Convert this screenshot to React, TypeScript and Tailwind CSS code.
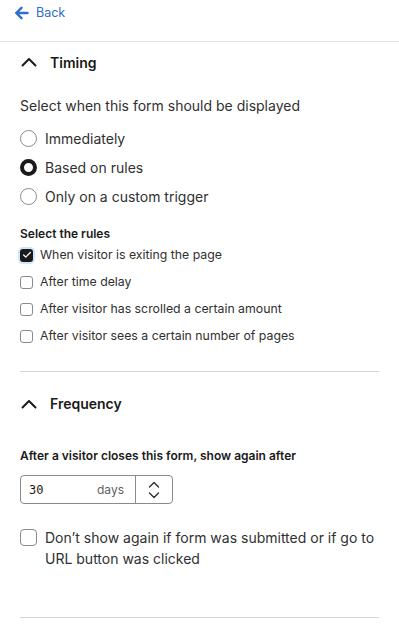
import { Check } from 'lucide-react';

const rules = [
  { label: 'When visitor is exiting the page', checked: true },
  { label: 'After time delay', checked: false },
  { label: 'After visitor has scrolled a certain amount', checked: false },
  { label: 'After visitor sees a certain number of pages', checked: false },
];

const radios = [
  { label: 'Immediately', checked: false },
  { label: 'Based on rules', checked: true },
  { label: 'Only on a custom trigger', checked: false },
];

const Radio = ({ checked }: { checked: boolean }) => (
  <span
    className={
      checked
        ? 'w-[17px] h-[17px] rounded-full border-[4px] border-[#1a1a1a] bg-white shrink-0'
        : 'w-[17px] h-[17px] rounded-full border border-[#8a8a8a] bg-white shrink-0'
    }
  />
);

const SmallBox = ({ checked }: { checked: boolean }) =>
  checked ? (
    <span className="w-[13px] h-[13px] rounded-[3px] bg-[#1a1a1a] flex items-center justify-center shrink-0 ring-2 ring-[#cfe6fb]">
      <Check size={10} strokeWidth={3} className="text-white" />
    </span>
  ) : (
    <span className="w-[13px] h-[13px] rounded-[3px] border border-[#8a8a8a] bg-white shrink-0" />
  );

const Caret = () => (
  <svg width="16" height="10" viewBox="0 0 16 10" className="shrink-0 text-[#1a1a1a]">
    <polyline points="1.5,8.5 8,2 14.5,8.5" fill="none" stroke="currentColor" strokeWidth="2" strokeLinecap="round" strokeLinejoin="round" />
  </svg>
);

const Section = ({ title }: { title: string }) => (
  <div className="flex items-center gap-[13px] pl-[1px]">
    <Caret />
    <span className="text-[14px] font-semibold text-[#1a1a1a]">{title}</span>
  </div>
);

export default function App() {
  return (
    <div className="w-[399px] h-[625px] overflow-hidden bg-white text-[#303030] font-['Inter',sans-serif]">
      {/* back link */}
      <div className="h-[42px] flex items-start pt-[4px] px-[14px] border-b border-[#e3e3e3]">
        <button className="flex items-center gap-[7px] text-[#2c6ecb] text-[12.5px]">
          <svg width="15" height="14" viewBox="0 0 15 14">
            <path d="M13.5 7H2.5M7.5 1.8 2.2 7l5.3 5.2" fill="none" stroke="currentColor" strokeWidth="2.4" strokeLinecap="round" strokeLinejoin="round" />
          </svg>
          Back
        </button>
      </div>

      <div className="px-[20px]">
        {/* Timing */}
        <div className="h-[40px] flex items-center">
          <Section title="Timing" />
        </div>

        <p className="mt-[15px] text-[14px] leading-[18px]">Select when this form should be displayed</p>
        <div className="mt-[14px] flex flex-col gap-[11px]">
          {radios.map(r => (
            <label key={r.label} className="flex items-center gap-[8px] h-[18px] text-[14px]">
              <Radio checked={r.checked} />
              {r.label}
            </label>
          ))}
        </div>

        <p className="mt-[21px] text-[12px] font-semibold leading-[16px] text-[#1a1a1a]">Select the rules</p>
        <div className="mt-[5px] flex flex-col gap-[11px]">
          {rules.map(r => (
            <label key={r.label} className="flex items-center gap-[7px] h-[16px] text-[12.3px]">
              <SmallBox checked={r.checked} />
              {r.label}
            </label>
          ))}
        </div>

        <div className="mt-[27px] border-t border-[#d6d6d6]" />

        {/* Frequency */}
        <div className="h-[63px] flex items-center">
          <Section title="Frequency" />
        </div>

        <p className="mt-[13px] text-[12px] font-semibold leading-[16px] text-[#1a1a1a]">
          After a visitor closes this form, show again after
        </p>
        <div className="mt-[11px] w-[153px] h-[29px] flex items-stretch border border-[#8a8a8a] rounded-[4px]">
          <div className="flex-1 flex items-center justify-between pl-[8px] pr-[11px]">
            <span className="font-['DejaVu_Sans_Mono',monospace] text-[12px] text-[#1a1a1a]">30</span>
            <span className="text-[12px] text-[#616161]">days</span>
          </div>
          <div className="w-[37px] border-l border-[#8a8a8a] flex items-center justify-center">
            <svg width="12" height="18" viewBox="0 0 12 18" className="text-[#303030]">
              <polyline points="1.5,6 6,1.5 10.5,6" fill="none" stroke="currentColor" strokeWidth="1.4" strokeLinecap="round" strokeLinejoin="round" />
              <polyline points="1.5,12 6,16.5 10.5,12" fill="none" stroke="currentColor" strokeWidth="1.4" strokeLinecap="round" strokeLinejoin="round" />
            </svg>
          </div>
        </div>

        <label className="mt-[23px] flex items-start gap-[8px] text-[14px] leading-[21px]">
          <span className="mt-[2px] w-[17px] h-[17px] rounded-[4px] border border-[#8a8a8a] bg-white shrink-0" />
          <span>Don’t show again if form was submitted or if go to URL button was clicked</span>
        </label>

        <div className="mt-[48px] border-t border-[#d6d6d6]" />
      </div>
    </div>
  );
}
